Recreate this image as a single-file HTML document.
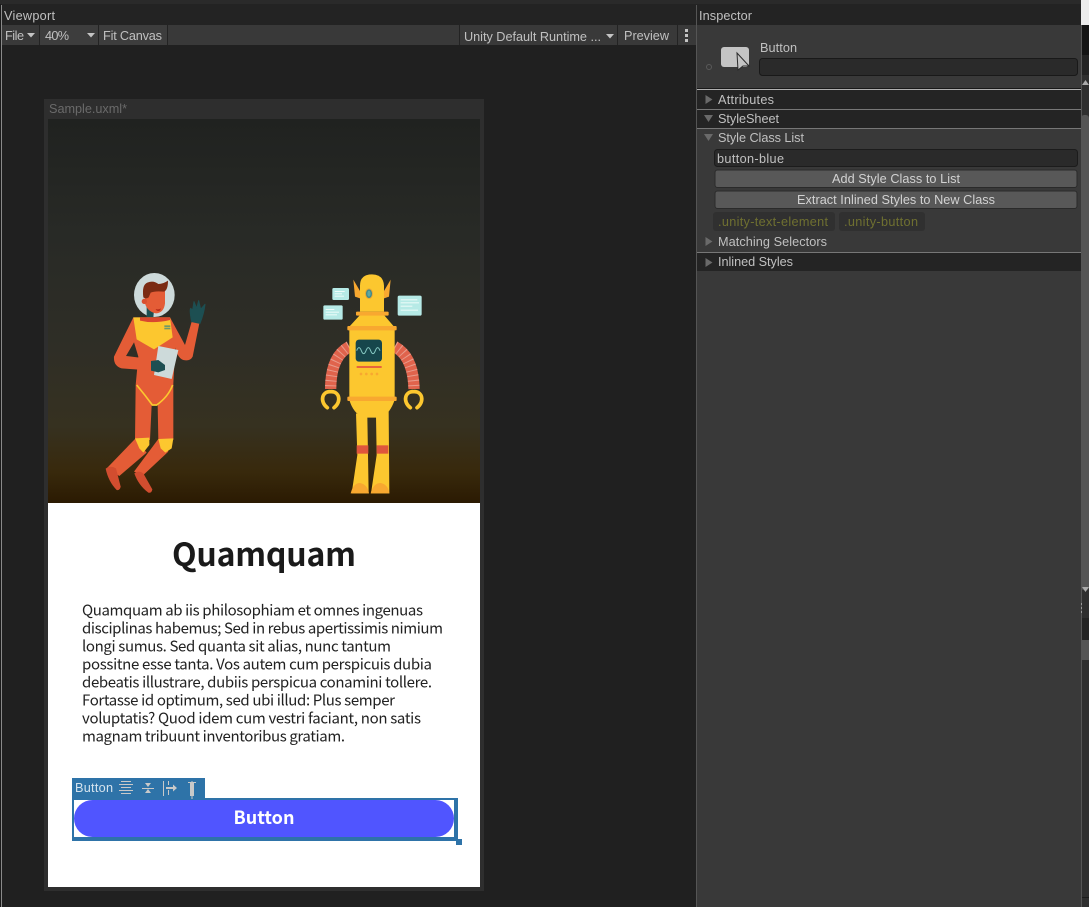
<!DOCTYPE html>
<html><head><meta charset="utf-8"><style>
html,body{margin:0;padding:0;background:#202020;width:1089px;height:907px;overflow:hidden}
svg{display:block}
text{font-family:"Liberation Sans",sans-serif;font-size:12.7px;fill:#c0c0c0}
.n{font-family:"Noto Sans CJK JP","Liberation Sans",sans-serif;font-size:15px;fill:#222}
.o{fill:#e45c36}.y{fill:#fcc72f}.a{fill:#f8a830}.g{fill:#1d4f52}
</style></head><body>
<svg width="1089" height="907" viewBox="0 0 1089 907" xmlns="http://www.w3.org/2000/svg">
<defs>
<linearGradient id="bg" x1="0" y1="0" x2="0" y2="1">
<stop offset="0" stop-color="#202220"/><stop offset=".3" stop-color="#282a26"/><stop offset=".6" stop-color="#2f2e26"/><stop offset=".8" stop-color="#363120"/><stop offset=".92" stop-color="#38290c"/><stop offset="1" stop-color="#2b1a02"/>
</linearGradient>
</defs>
<rect width="1089" height="907" fill="#202020"/>
<rect width="1089" height="4" fill="#2a2a2a"/>
<rect y="4" width="1081" height="21" fill="#232323"/>
<rect x="0" y="4" width="1" height="903" fill="#1a1a1a"/>
<rect x="1" y="5" width="1" height="902" fill="#8a8a8a"/>
<rect x="2" y="25" width="694" height="20" fill="#393939"/>
<g fill="#232323"><rect x="39" y="25" width="1" height="20"/><rect x="98" y="25" width="1" height="20"/><rect x="167" y="25" width="1" height="20"/><rect x="459" y="25" width="1" height="20"/><rect x="617" y="25" width="1" height="20"/><rect x="677" y="25" width="1" height="20"/></g>
<rect x="40" y="25" width="58" height="20" fill="#3d3d3d"/>
<rect x="99" y="25" width="68" height="20" fill="#3d3d3d"/>
<text x="4" y="20" textLength="51">Viewport</text>
<text x="5" y="40" textLength="19">File</text>
<path d="M27 33h8l-4 4.500z" fill="#c4c4c4"/>
<text x="45" y="40" textLength="24">40%</text>
<path d="M87 33h8l-4 4.500z" fill="#c4c4c4"/>
<text x="103" y="40" textLength="59">Fit Canvas</text>
<text x="464" y="41" textLength="137">Unity Default Runtime ...</text>
<path d="M606 34h8l-4 4.500z" fill="#c4c4c4"/>
<text x="624" y="40" textLength="45">Preview</text>
<g fill="#c4c4c4"><rect x="685" y="29" width="3" height="3"/><rect x="685" y="34" width="3" height="3"/><rect x="685" y="39" width="3" height="3"/></g>

<!-- canvas frame -->
<rect x="44" y="99" width="440" height="792" fill="#2e2e2e"/>
<text x="49" y="113" textLength="78" style="fill:#6a6a6a">Sample.uxml*</text>
<rect x="48" y="119" width="432" height="384" fill="url(#bg)"/>
<rect x="48" y="503" width="432" height="384" fill="#fff"/>

<!-- astronaut -->
<g transform="translate(90,260) scale(.33333)" style="filter:blur(.4px)">
<ellipse cx="193" cy="105" rx="61" ry="66" fill="#cddada"/>
<path d="M170 140L192 150 190 172 170 172Z" class="g"/>
<path d="M165 85L225 85 225 130Q222 158 198 160 172 155 165 130Z" class="o"/>
<path d="M160 112Q155 75 172 68 190 60 205 72 220 72 234 62 234 90 222 95 195 92 182 98L176 112Q168 118 160 112Z" fill="#7b2b13"/>
<circle cx="163" cy="124" r="8" fill="#d9502f"/>
<path d="M197 147q9 3 16-2q-3 9-8 8q-6 0-8-6z" fill="#b52a1a"/>
<path d="M130 172L72 290Q70 318 95 325L190 332 190 298 108 288 145 225Z" class="o"/>
<path d="M240 172L285 255 305 185 328 190 308 290Q300 305 280 300 265 295 258 270L240 225Z" class="o"/>
<path d="M130 172L240 172 258 225 250 370 250 540 205 540 203 435 185 435 180 540 135 540 137 375 145 290 130 240Z" class="o"/>
<path d="M130 172L240 172 248 232 192 268 140 238Z" class="y"/>
<path d="M150 172H240V180Q190 192 150 182Z" fill="#d9472f"/>
<rect x="223" y="196" width="18" height="5" fill="#6f9a6a"/><rect x="223" y="203" width="18" height="5" fill="#6f9a6a"/>
<path d="M205 258L265 270 245 357 192 345Z" fill="#cddada"/>
<path d="M183 303L205 300 225 315 225 330 205 337 183 332Z" class="g"/>
<path d="M305 185Q298 150 302 145L308 150 312 125 320 145 326 122 332 148 345 133Q342 160 330 190Z" class="g" stroke="#1d4f52" stroke-width="3" stroke-linejoin="round"/>
<path d="M140 375Q165 405 187 435L200 435Q235 410 248 375" fill="none" stroke="#fcc72f" stroke-width="5"/>
<path d="M135 537L170 578 88 648 50 625Z" class="o"/>
<path d="M205 537L235 575 160 645 132 635Z" class="o"/>
<path d="M135 535L178 533 178 555 160 578 148 565Z" class="y"/>
<path d="M205 537L250 535 245 565 226 578 212 565Z" class="y"/>
<path d="M47 626Q60 615 78 625L92 680Q90 692 80 690 55 665 47 626Z" fill="#d24d2f"/>
<path d="M133 640Q145 630 160 640L187 688Q185 700 175 698 145 675 133 640Z" fill="#d24d2f"/>
</g>

<!-- robot -->
<g transform="translate(310,265) scale(.33333)" style="filter:blur(.4px)">
<g fill="#b6eae6"><rect x="67" y="69" width="50" height="36" rx="4"/><rect x="40" y="121" width="58" height="43" rx="4"/><rect x="263" y="92" width="72" height="60" rx="5"/></g>
<g fill="#eefcfa"><rect x="74" y="78" width="30" height="3"/><rect x="74" y="85" width="22" height="3"/><rect x="74" y="92" width="28" height="3"/><rect x="47" y="132" width="26" height="3"/><rect x="47" y="140" width="40" height="3"/><rect x="47" y="148" width="34" height="3"/><rect x="272" y="103" width="50" height="3"/><rect x="272" y="112" width="55" height="3"/><rect x="272" y="122" width="35" height="3"/><rect x="272" y="134" width="52" height="3"/></g>
<path d="M118 245Q62 275 62 372" fill="none" stroke="#e0634c" stroke-width="34"/>
<path d="M118 245Q62 275 62 372" fill="none" stroke="#e89a8a" stroke-width="34" stroke-dasharray="3 12"/>
<path d="M254 245Q310 275 312 372" fill="none" stroke="#e0634c" stroke-width="34"/>
<path d="M254 245Q310 275 312 372" fill="none" stroke="#e89a8a" stroke-width="34" stroke-dasharray="3 12"/>
<path d="M52 428C28 410 36 378 62 380C88 378 96 410 72 428" fill="none" stroke="#fcc72f" stroke-width="11" stroke-linecap="round"/>
<path d="M301 428C277 410 285 378 311 380C337 378 345 410 321 428" fill="none" stroke="#fcc72f" stroke-width="11" stroke-linecap="round"/>
<path d="M130 44L150 78 150 100 135 95Z" class="a"/>
<path d="M242 44L222 78 222 100 237 95Z" class="a"/>
<path d="M150 140L150 62Q150 28 186 28 220 28 222 62L222 140Z" class="y"/>
<ellipse cx="177" cy="86" rx="12" ry="16" fill="#eaa634"/><ellipse cx="177" cy="86" rx="9" ry="13" fill="#3e8a8a"/><ellipse cx="177" cy="86" rx="5" ry="9" fill="#5fa7a2"/>
<path d="M138 445L172 455 176 685 125 685 142 570Z" class="y"/>
<path d="M198 455L236 440 238 685 183 685 200 570Z" class="y"/>
<path d="M150 150L222 150 252 185 118 185Z" class="y"/>
<rect x="138" y="140" width="98" height="12" rx="3" class="a"/>
<rect x="118" y="190" width="136" height="210" class="y"/>
<path d="M118 405L254 405Q240 445 215 458H160Q130 445 118 405Z" class="y"/>
<rect x="112" y="183" width="148" height="13" rx="3" class="a"/>
<rect x="112" y="395" width="148" height="13" rx="3" class="a"/>
<rect x="137" y="224" width="79" height="66" rx="10" fill="#16464c"/>
<path d="M140 257q7-18 14 0t14 0 14 0 14 0 14 0" fill="none" stroke="#86c9c3" stroke-width="3"/>
<rect x="140" y="303" width="75" height="6" fill="#e8643c"/>
<g fill="#f8a830"><circle cx="153" cy="327" r="4"/><circle cx="169" cy="327" r="4"/><circle cx="185" cy="327" r="4"/><circle cx="201" cy="327" r="4"/></g>
<rect x="140" y="541" width="35" height="25" fill="#df563c"/>
<rect x="200" y="541" width="35" height="25" fill="#df563c"/>
<path d="M122 685Q130 654 150 654 172 658 177 685Z" class="a"/>
<path d="M182 685Q190 654 212 654 234 658 238 685Z" class="a"/>
</g>

<!-- content -->
<text x="172" y="566" textLength="184" style="font-family:'Noto Sans CJK JP','Liberation Sans',sans-serif;font-size:32px;font-weight:700;fill:#1a1a1a">Quamquam</text>
<text class="n" x="82" y="615.500" textLength="341">Quamquam ab iis philosophiam et omnes ingenuas</text>
<text class="n" x="82" y="633.500" textLength="361">disciplinas habemus; Sed in rebus apertissimis nimium</text>
<text class="n" x="82" y="651.500" textLength="309">longi sumus. Sed quanta sit alias, nunc tantum</text>
<text class="n" x="82" y="669.500" textLength="350">possitne esse tanta. Vos autem cum perspicuis dubia</text>
<text class="n" x="82" y="687.500" textLength="350">debeatis illustrare, dubiis perspicua conamini tollere.</text>
<text class="n" x="82" y="705.500" textLength="313">Fortasse id optimum, sed ubi illud: Plus semper</text>
<text class="n" x="82" y="723.500" textLength="339">voluptatis? Quod idem cum vestri faciant, non satis</text>
<text class="n" x="82" y="741.500" textLength="263">magnam tribuunt inventoribus gratiam.</text>

<!-- button + selection -->
<rect x="74" y="800" width="380" height="37" rx="18.500" fill="#5055ff"/>
<text x="233.500" y="824" textLength="61" style="font-family:'Noto Sans CJK JP','Liberation Sans',sans-serif;font-size:18px;font-weight:700;fill:#fff">Button</text>
<path d="M72 798H458V841H72ZM74 800V837H454V800Z" fill="#2e73a8" fill-rule="evenodd"/>
<rect x="456" y="839" width="6" height="6" fill="#2e73a8"/>
<rect x="72" y="778" width="133" height="20" fill="#2e73a8"/>
<text x="75" y="792" textLength="38" style="fill:#d5e3ee">Button</text>
<g stroke="#c9c9c9" stroke-width="1" fill="none">
<path d="M121 781.500h10M119 784.500h14M121 787.500h10M119 790.500h14M121 793.500h10"/>
<path d="M142 788.500h12"/>
<path d="M163.500 781v15M168.500 781v4M168.500 790v5"/>
<path d="M192 781v18M188 782.500h8"/>
</g>
<g fill="#c9c9c9">
<path d="M145 783h6l-3 4zM145 793h6l-3-4z"/>
<path d="M166 787h7v-2.500l4 3.500-4 3.500v-2.500h-7z"/>
<rect x="190" y="783" width="4" height="13"/>
</g>

<!-- inspector -->
<rect x="696" y="5" width="1" height="902" fill="#555"/>
<rect x="697" y="25" width="384" height="882" fill="#393939"/>
<text x="699" y="20" textLength="53">Inspector</text>
<path d="M724 47h22a3 3 0 0 1 3 3v14a3 3 0 0 1-3 3h-22a3 3 0 0 1-3-3v-14a3 3 0 0 1 3-3z" fill="#c4c4c4"/>
<path d="M737 53L749 66 743 66 738 70Z" fill="#c4c4c4" stroke="#2b2b2b" stroke-width="1"/>
<circle cx="709" cy="67" r="2.500" fill="none" stroke="#5a5a5a"/>
<text x="760" y="52" textLength="37">Button</text>
<rect x="759.500" y="58.500" width="318" height="17" rx="3" fill="#2a2a2a" stroke="#191919"/>
<rect x="697" y="88" width="384" height="1" fill="#191919"/>
<rect x="697" y="89" width="384" height="1" fill="#b0b0b0"/>
<rect x="697" y="90" width="384" height="19" fill="#242424"/>
<rect x="697" y="109" width="384" height="1" fill="#777"/>
<rect x="697" y="110" width="384" height="18" fill="#242424"/>
<rect x="697" y="128" width="384" height="1" fill="#777"/>
<rect x="697" y="252" width="384" height="1" fill="#777"/>
<rect x="697" y="253" width="384" height="18" fill="#242424"/>
<g fill="#6a6a6a">
<path d="M705.500 95v9l7-4.500z"/>
<path d="M704 115h9l-4.500 7z"/>
<path d="M704 134h9l-4.500 7z"/>
<path d="M705.500 237v9l7-4.500z"/>
<path d="M705.500 258v9l7-4.500z"/>
</g>
<text x="718" y="104" textLength="56">Attributes</text>
<text x="718" y="123" textLength="61">StyleSheet</text>
<text x="718" y="142" textLength="86">Style Class List</text>
<rect x="714.500" y="149.500" width="363" height="17" rx="3" fill="#2a2a2a" stroke="#1c1c1c"/>
<text x="717" y="163" textLength="67">button-blue</text>
<rect x="715" y="170" width="362" height="17.500" rx="2.500" fill="#585858" stroke="#2a2a2a"/>
<text x="832" y="183" textLength="128" style="fill:#d2d2d2">Add Style Class to List</text>
<rect x="715" y="191" width="362" height="17.500" rx="2.500" fill="#585858" stroke="#2a2a2a"/>
<text x="797" y="204" textLength="198" style="fill:#d2d2d2">Extract Inlined Styles to New Class</text>
<rect x="713" y="212" width="122" height="19" rx="3" fill="#303030"/>
<rect x="839" y="212" width="86" height="19" rx="3" fill="#303030"/>
<text x="718" y="226" textLength="110" style="fill:#6f7030">.unity-text-element</text>
<text x="844" y="226" textLength="74" style="fill:#6f7030">.unity-button</text>
<text x="718" y="246" textLength="109">Matching Selectors</text>
<text x="718" y="266" textLength="75">Inlined Styles</text>

<!-- right strip -->
<rect x="1081" y="0" width="8" height="25" fill="#ececec"/>
<rect x="1081" y="25" width="8" height="30" fill="#141414"/>
<rect x="1081" y="55" width="8" height="852" fill="#2f2f2f"/>
<rect x="1081" y="55" width="8" height="20" fill="#232323"/>
<rect x="1081" y="115" width="8" height="475" rx="3" fill="#555"/>
<path d="M1082 85l3.500-5 3.500 5z" fill="#aaa"/>
<path d="M1082 587h7l-3.500 5z" fill="#aaa"/>
<rect x="1081" y="618" width="8" height="22" fill="#242424"/>
<rect x="1081" y="640" width="8" height="20" fill="#555"/>
<rect x="1081" y="897" width="8" height="1" fill="#1c1c1c"/>
<rect x="1081" y="25" width="1" height="882" fill="#555"/>
<g fill="#999"><rect x="1081" y="603" width="1" height="2"/><rect x="1081" y="607" width="1" height="2"/><rect x="1081" y="611" width="1" height="2"/></g>
</svg>
</body></html>
